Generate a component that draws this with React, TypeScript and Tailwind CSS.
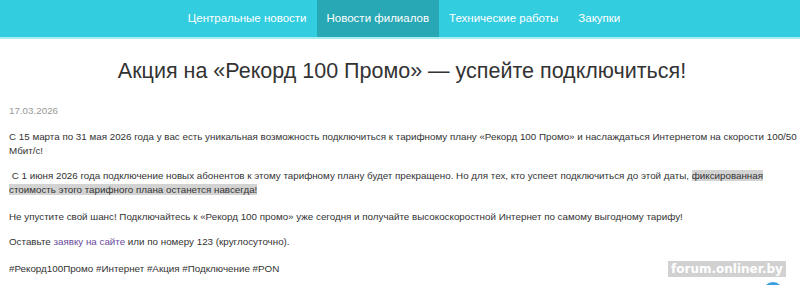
import React from "react";

export default function App() {
  return (
    <div className="w-[800px] h-[285px] bg-white overflow-hidden relative font-['Liberation_Sans',Arial,sans-serif]">
      <nav className="h-[39px] bg-[#33cde0] border-b-2 border-[#a9ecf3] flex justify-center pl-[8px]">
        <a className="px-[10px] flex items-center text-white text-[11.5px]">Центральные новости</a>
        <a className="px-[10px] flex items-center text-white text-[11.5px] bg-[#28a8b5]">Новости филиалов</a>
        <a className="px-[10px] flex items-center text-white text-[11.5px]">Технические работы</a>
        <a className="px-[10px] flex items-center text-white text-[11.5px]">Закупки</a>
      </nav>
      <h1 className="text-center text-[21.5px] text-[#333] mt-[16px] leading-[32px] pl-[4px]">
        Акция на «Рекорд 100 Промо» — успейте подключиться!
      </h1>
      <div className="pl-[9px] pr-[2px] text-[9.8px] text-[#333] leading-[14px]">
        <p className="text-[#999] mt-[17px]">17.03.2026</p>
        <p className="mt-[12px]">
          <span className="whitespace-nowrap">С 15 марта по 31 мая 2026 года у вас есть уникальная возможность подключиться к тарифному плану «Рекорд 100 Промо» и наслаждаться Интернетом на скорости 100/50</span>
          <br />
          Мбит/с!
        </p>
        <p className="mt-[11px]">
          <span className="whitespace-nowrap">&nbsp;С 1 июня 2026 года подключение новых абонентов к этому тарифному плану будет прекращено. Но для тех, кто успеет подключиться до этой даты,{" "}</span>
          <span className="bg-[#d3d3d3]">фиксированная<br />стоимость этого тарифного плана останется навсегда!</span>
        </p>
        <p className="mt-[13px]">
          Не упустите свой шанс! Подключайтесь к «Рекорд 100 промо» уже сегодня и получайте высокоскоростной Интернет по самому выгодному тарифу!
        </p>
        <p className="mt-[11px]">
          Оставьте <a className="text-[#6a4a9c]">заявку на сайте</a> или по номеру 123 (круглосуточно).
        </p>
        <p className="mt-[13px]">#Рекорд100Промо #Интернет #Акция #Подключение #PON</p>
      </div>
      <div className="absolute left-[668px] top-[261px] px-[3px] bg-[#bdbdbd]/70 text-white font-bold text-[12px] leading-[16px] font-['DejaVu_Sans',sans-serif]">
        forum.onliner.by
      </div>
      <div className="absolute left-[763px] top-[282px] w-[20px] h-[20px] rounded-full bg-[#3aa0e0]" />
    </div>
  );
}
